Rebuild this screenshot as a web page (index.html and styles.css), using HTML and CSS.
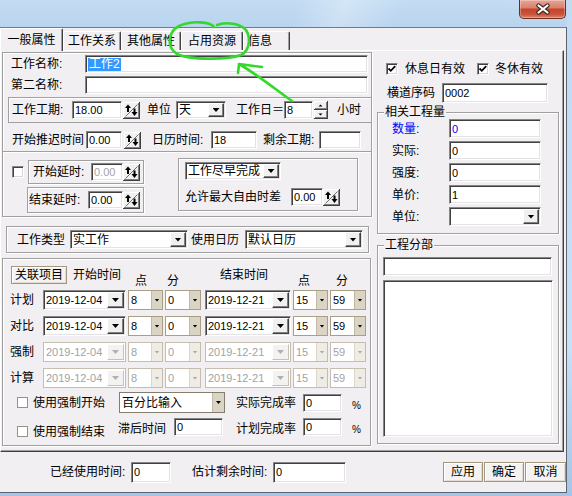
FILE: index.html
```html
<!DOCTYPE html>
<html lang="zh-CN">
<head>
<meta charset="utf-8">
<title>工作属性</title>
<link rel="stylesheet" href="styles.css">
</head>
<body>
<div class="window">
  <div class="titlebar">
    <div class="close"><svg width="18" height="12" viewBox="0 0 18 12"><path d="M4.5 2.5 L13.5 9.5 M13.5 2.5 L4.5 9.5" stroke="#3b2a26" stroke-width="4.4" stroke-linecap="round"/><path d="M4.5 2.5 L13.5 9.5 M13.5 2.5 L4.5 9.5" stroke="#fff" stroke-width="2.2" stroke-linecap="round"/></svg></div>
  </div>
  <div class="client">
    <div class="tabs">
      <div class="tab active w63">一般属性</div>
      <div class="tab w58">工作关系</div>
      <div class="tab w60">其他属性</div>
      <div class="tab w62">占用资源</div>
      <div class="tab w47 tleft">信息</div>
    </div>
    <div class="page">
      <div class="leftcol">
        <div class="grp grp-a">
          <div class="row r-name">
            <span class="lbl w74">工作名称:</span>
            <div class="inp w283 h18"><span class="sel">工作2</span></div>
          </div>
          <div class="row r-name2">
            <span class="lbl w74">第二名称:</span>
            <div class="inp w283 h18"></div>
          </div>
          <div class="subbox">
            <span class="lbl w60">工作工期:</span>
            <div class="inp w50 h18">18.00</div>
            <svg class="spin ml1" width="17" height="17" viewBox="0 0 17 17"><rect width="17" height="17" fill="#404040"/><rect width="16" height="16" fill="#fff"/><rect x="1" y="1" width="15" height="15" fill="#808080"/><rect x="1" y="1" width="14" height="14" fill="#f0f0f0"/><path d="M2.5 14.5 L14.5 2.5" stroke="#707070"/><path d="M2 6 L5 2.5 L8 6 Z" fill="#000"/><rect x="4" y="5.5" width="2" height="4.5" fill="#000"/><rect x="10.5" y="6.5" width="2" height="4" fill="#000"/><path d="M8.5 10 L11.5 14 L14.5 10 Z" fill="#000"/></svg>
            <span class="lbl ml7 w29">单位</span>
            <div class="inp combo w50 h18"><span class="ctext">天</span><span class="dd"></span></div>
            <span class="lbl ml10 w48">工作日＝</span>
            <div class="inp w29 h18">8</div>
            <svg class="updown ml1" width="14" height="18" viewBox="0 0 14 18"><rect width="14" height="9" fill="#404040"/><rect width="13" height="8" fill="#fff"/><rect x="1" y="1" width="12" height="7" fill="#808080"/><rect x="1" y="1" width="11" height="6" fill="#f0f0f0"/><path d="M4.5 5.5 L6.5 3.5 L8.5 5.5 Z" fill="#000"/><rect y="9" width="14" height="9" fill="#404040"/><rect y="9" width="13" height="8" fill="#fff"/><rect x="1" y="10" width="12" height="7" fill="#808080"/><rect x="1" y="10" width="11" height="6" fill="#f0f0f0"/><path d="M4.5 12.5 L6.5 14.5 L8.5 12.5 Z" fill="#000"/></svg>
            <span class="lbl ml9">小时</span>
          </div>
          <div class="row r-delay">
            <span class="lbl w74">开始推迟时间</span>
            <div class="inp w36 h18">0.00</div>
            <svg class="spin ml2" width="17" height="17" viewBox="0 0 17 17"><rect width="17" height="17" fill="#404040"/><rect width="16" height="16" fill="#fff"/><rect x="1" y="1" width="15" height="15" fill="#808080"/><rect x="1" y="1" width="14" height="14" fill="#f0f0f0"/><path d="M2.5 14.5 L14.5 2.5" stroke="#707070"/><path d="M2 6 L5 2.5 L8 6 Z" fill="#000"/><rect x="4" y="5.5" width="2" height="4.5" fill="#000"/><rect x="10.5" y="6.5" width="2" height="4" fill="#000"/><path d="M8.5 10 L11.5 14 L14.5 10 Z" fill="#000"/></svg>
            <span class="lbl ml11 w59">日历时间:</span>
            <div class="inp w46 h18">18</div>
            <span class="lbl ml6 w56">剩余工期:</span>
            <div class="inp w42 h18"></div>
          </div>
        </div>

        <div class="grp grp-b">
          <div class="b-left">
            <div class="b-row1">
              <span class="cb"></span>
              <div class="box box1">
                <span class="lbl w58">开始延时:</span>
                <div class="inp w32 h18 dis">0.00</div>
                <svg class="spin" width="17" height="17" viewBox="0 0 17 17"><rect width="17" height="17" fill="#404040"/><rect width="16" height="16" fill="#fff"/><rect x="1" y="1" width="15" height="15" fill="#808080"/><rect x="1" y="1" width="14" height="14" fill="#f0f0f0"/><path d="M2.5 14.5 L14.5 2.5" stroke="#707070"/><path d="M2 6 L5 2.5 L8 6 Z" fill="#000"/><rect x="4" y="5.5" width="2" height="4.5" fill="#000"/><rect x="10.5" y="6.5" width="2" height="4" fill="#000"/><path d="M8.5 10 L11.5 14 L14.5 10 Z" fill="#000"/></svg>
              </div>
            </div>
            <div class="box box2">
              <span class="lbl w59">结束延时:</span>
              <div class="inp w35 h18">0.00</div>
              <svg class="spin" width="17" height="17" viewBox="0 0 17 17"><rect width="17" height="17" fill="#404040"/><rect width="16" height="16" fill="#fff"/><rect x="1" y="1" width="15" height="15" fill="#808080"/><rect x="1" y="1" width="14" height="14" fill="#f0f0f0"/><path d="M2.5 14.5 L14.5 2.5" stroke="#707070"/><path d="M2 6 L5 2.5 L8 6 Z" fill="#000"/><rect x="4" y="5.5" width="2" height="4.5" fill="#000"/><rect x="10.5" y="6.5" width="2" height="4" fill="#000"/><path d="M8.5 10 L11.5 14 L14.5 10 Z" fill="#000"/></svg>
            </div>
          </div>
          <div class="box b-right">
            <div class="inp combo w96 h18"><span class="ctext">工作尽早完成</span><span class="dd"></span></div>
            <div class="b-rrow">
              <span class="lbl w106">允许最大自由时差</span>
              <div class="inp w32 h18">0.00</div>
              <svg class="spin" width="17" height="17" viewBox="0 0 17 17"><rect width="17" height="17" fill="#404040"/><rect width="16" height="16" fill="#fff"/><rect x="1" y="1" width="15" height="15" fill="#808080"/><rect x="1" y="1" width="14" height="14" fill="#f0f0f0"/><path d="M2.5 14.5 L14.5 2.5" stroke="#707070"/><path d="M2 6 L5 2.5 L8 6 Z" fill="#000"/><rect x="4" y="5.5" width="2" height="4.5" fill="#000"/><rect x="10.5" y="6.5" width="2" height="4" fill="#000"/><path d="M8.5 10 L11.5 14 L14.5 10 Z" fill="#000"/></svg>
            </div>
          </div>
        </div>

        <div class="grp grp-c">
          <span class="lbl w53">工作类型</span>
          <div class="inp combo w118 h19"><span class="ctext">实工作</span><span class="dd"></span></div>
          <span class="lbl ml3 w54">使用日历</span>
          <div class="inp combo w118 h19"><span class="ctext">默认日历</span><span class="dd"></span></div>
        </div>

        <div class="grp grp-d">
          <div class="d-head">
            <div class="tbtn w56 h18">关联项目</div>
            <span class="lbl ml6">开始时间</span>
            <span class="lbl ml14 low">点</span>
            <span class="lbl ml20 low">分</span>
            <span class="lbl ml41">结束时间</span>
            <span class="lbl ml30 low">点</span>
            <span class="lbl ml26 low">分</span>
          </div>
          <div class="d-row">
            <span class="lbl w33">计划</span>
            <div class="inp combo w83 h20"><span class="ctext num">2019-12-04</span><span class="dd dd17"></span></div>
            <div class="tcombo w35 h20 ml2"><span class="ctext">8</span><span class="tdd"></span></div>
            <div class="tcombo w36 h20 ml2"><span class="ctext">0</span><span class="tdd"></span></div>
            <div class="inp combo w86 h20 ml4"><span class="ctext num">2019-12-21</span><span class="dd dd17"></span></div>
            <div class="tcombo w35 h20 ml2"><span class="ctext">15</span><span class="tdd"></span></div>
            <div class="tcombo w36 h20 ml2"><span class="ctext">59</span><span class="tdd"></span></div>
          </div>
          <div class="d-row">
            <span class="lbl w33">对比</span>
            <div class="inp combo w83 h20"><span class="ctext num">2019-12-04</span><span class="dd dd17"></span></div>
            <div class="tcombo w35 h20 ml2"><span class="ctext">8</span><span class="tdd"></span></div>
            <div class="tcombo w36 h20 ml2"><span class="ctext">0</span><span class="tdd"></span></div>
            <div class="inp combo w86 h20 ml4"><span class="ctext num">2019-12-21</span><span class="dd dd17"></span></div>
            <div class="tcombo w35 h20 ml2"><span class="ctext">15</span><span class="tdd"></span></div>
            <div class="tcombo w36 h20 ml2"><span class="ctext">59</span><span class="tdd"></span></div>
          </div>
          <div class="d-row">
            <span class="lbl w33">强制</span>
            <div class="dcombo dis w83 h20"><span class="ctext">2019-12-04</span><span class="ddd"></span></div>
            <div class="tcombo dis w35 h20 ml2"><span class="ctext">8</span><span class="tdd"></span></div>
            <div class="tcombo dis w36 h20 ml2"><span class="ctext">0</span><span class="tdd"></span></div>
            <div class="dcombo dis w86 h20 ml4"><span class="ctext">2019-12-21</span><span class="ddd"></span></div>
            <div class="tcombo dis w35 h20 ml2"><span class="ctext">15</span><span class="tdd"></span></div>
            <div class="tcombo dis w36 h20 ml2"><span class="ctext">59</span><span class="tdd"></span></div>
          </div>
          <div class="d-row">
            <span class="lbl w33">计算</span>
            <div class="dcombo dis w83 h20"><span class="ctext">2019-12-04</span><span class="ddd"></span></div>
            <div class="tcombo dis w35 h20 ml2"><span class="ctext">8</span><span class="tdd"></span></div>
            <div class="tcombo dis w36 h20 ml2"><span class="ctext">0</span><span class="tdd"></span></div>
            <div class="dcombo dis w86 h20 ml4"><span class="ctext">2019-12-21</span><span class="ddd"></span></div>
            <div class="tcombo dis w35 h20 ml2"><span class="ctext">15</span><span class="tdd"></span></div>
            <div class="tcombo dis w36 h20 ml2"><span class="ctext">59</span><span class="tdd"></span></div>
          </div>
          <div class="o-row o-row1">
            <div class="o-cell w101"><span class="tcb"></span><span class="lbl ml5">使用强制开始</span></div>
            <div class="o-cell w118"><div class="tcombo pcombo w106 h21 ml1"><span class="ctext">百分比输入</span><span class="tdd"></span></div></div>
            <span class="lbl w67">实际完成率</span>
            <div class="inp w39 h18">0</div>
            <span class="pct ml10">%</span>
          </div>
          <div class="o-row o-row2">
            <div class="o-cell w101 lowcell"><span class="tcb"></span><span class="lbl ml5">使用强制结束</span></div>
            <div class="o-cell w118"><span class="lbl w56 lowtxt">滞后时间</span><div class="inp w49 h18">0</div></div>
            <span class="lbl w67 lowtxt">计划完成率</span>
            <div class="inp w39 h18">0</div>
            <span class="pct ml10">%</span>
          </div>
        </div>
      </div>

      <div class="rightcol">
        <div class="rc-chk">
          <span class="cb"><svg width="10" height="10" viewBox="0 0 10 10"><path d="M1.5 4.5 L3.8 6.8 L8.2 2.2" fill="none" stroke="#000" stroke-width="1.8"/></svg></span>
          <span class="lbl ml7 w60">休息日有效</span>
          <span class="cb ml12"><svg width="10" height="10" viewBox="0 0 10 10"><path d="M1.5 4.5 L3.8 6.8 L8.2 2.2" fill="none" stroke="#000" stroke-width="1.8"/></svg></span>
          <span class="lbl ml6">冬休有效</span>
        </div>
        <div class="rc-code">
          <span class="lbl w55">横道序码</span>
          <div class="inp w106 h20">0002</div>
        </div>
        <fieldset class="fs fs1">
          <legend>相关工程量</legend>
          <div class="fs-row"><span class="lbl w57 blue">数量:</span><div class="inp w92 h19 blue">0</div></div>
          <div class="fs-row"><span class="lbl w57">实际:</span><div class="inp w92 h19">0</div></div>
          <div class="fs-row"><span class="lbl w57">强度:</span><div class="inp w92 h19">0</div></div>
          <div class="fs-row"><span class="lbl w57">单价:</span><div class="inp w92 h19">1</div></div>
          <div class="fs-row"><span class="lbl w57">单位:</span><div class="inp combo w92 h19"><span class="ctext"></span><span class="dd"></span></div></div>
        </fieldset>
        <fieldset class="fs fs2">
          <legend>工程分部</legend>
          <div class="inp w169 h19"></div>
          <div class="inp listbox w170"></div>
        </fieldset>
      </div>
    </div>

    <div class="footer">
      <span class="lbl w81">已经使用时间:</span>
      <div class="inp w40 h21">0</div>
      <span class="lbl ml21 w81">估计剩余时间:</span>
      <div class="inp w73 h21">0</div>
      <div class="btns">
        <div class="btn w40">应用</div>
        <div class="btn w40">确定</div>
        <div class="btn w41">取消</div>
      </div>
    </div>
  </div>
</div>
<svg class="annot" width="572" height="496" viewBox="0 0 572 496">
  <path d="M214 27 C211 22 192 20 179 26 C168 32 166 47 177 54 C189 60 228 60 241 55 C251 50 251 34 244 28 C237 23 224 22 217 25" fill="none" stroke="#33d92a" stroke-width="2.6" stroke-linecap="round" stroke-linejoin="round"/>
  <path d="M292 101 C275 89 258 75 239 64 M239 64 L262 67 M239 64 L238 73" fill="none" stroke="#33d92a" stroke-width="2.6" stroke-linecap="round" stroke-linejoin="round"/>
</svg>
</body>
</html>
```

FILE: styles.css
```css
* { box-sizing: border-box; }
html, body { margin: 0; padding: 0; }
body {
  width: 572px; height: 496px; overflow: hidden; position: relative;
  background: linear-gradient(180deg, #c2daf2 0%, #c9e0f5 70%, #a8c4e4 100%);
  font-family: "Liberation Sans", "Noto Sans CJK SC", sans-serif;
  font-size: 12px; line-height: 14px; color: #000;
}
.window { width: 567px; height: 493px; display: flex; flex-direction: column; }
.titlebar {
  height: 27px; flex: none; display: flex; justify-content: flex-end; align-items: flex-start;
  background:
    linear-gradient(110deg, rgba(255,255,255,0) 52%, rgba(255,255,255,.28) 60%, rgba(255,255,255,0) 70%),
    linear-gradient(180deg, #c4dcf3 0%, #b9d4ef 100%);
}
.close {
  width: 47px; height: 19px; margin-right: 1px;
  display: flex; align-items: center; justify-content: center;
  background: linear-gradient(180deg, #e7a595 0%, #d9826c 42%, #c4452c 52%, #c9543b 80%, #da866d 100%);
  border: 1px solid #6f2b1f; border-top: 0; border-radius: 0 0 5px 5px;
  box-shadow: inset 0 0 0 1px rgba(255,255,255,.3);
}
.client {
  flex: 1; display: flex; flex-direction: column; background: #f1eff1;
  border-top: 1px solid #6e7b8a; border-right: 1px solid #5a6571; border-bottom: 1px solid #5a6571;
}
.tabs { height: 22px; flex: none; display: flex; align-items: flex-end; }
.tab {
  flex: none; height: 19px; display: flex; align-items: center; justify-content: center;
  border-top: 1px solid #fff; border-left: 1px solid #fff; border-right: 1px solid #404040;
  box-shadow: inset -1px 0 0 #a0a0a0; border-radius: 2px 2px 0 0; background: #f1eff1;
  white-space: nowrap;
}
.tab.active { height: 23px; margin-bottom: -1px; position: relative; z-index: 1; }
.tab.tleft { justify-content: flex-start; padding-left: 4px; }

.page {
  flex: none; width: 564px; height: 402px; display: flex; align-items: flex-start;
  padding: 1px 0 0 1px;
  border-top: 1px solid #fff; border-left: 1px solid #fff;
  border-right: 1px solid #404040; border-bottom: 1px solid #404040;
  box-shadow: inset -1px -1px 0 #a0a0a0;
}
.leftcol { flex: none; width: 370px; display: flex; flex-direction: column; }
.rightcol { flex: none; width: 182px; margin-left: 5px; display: flex; flex-direction: column; }

.grp, .box {
  border: 1px solid #a0a0a0;
  box-shadow: inset 1px 1px 0 #fff, 1px 1px 0 #fff;
}
.grp-a { height: 100px; width: 370px; display: flex; flex-direction: column; }
.row { display: flex; align-items: center; height: 18px; }
.r-name { margin-top: 2px; padding-left: 8px; }
.r-name2 { margin-top: 3px; padding-left: 8px; }
.subbox {
  margin-top: 3px; margin-left: 5px; width: 363px; height: 26px;
  border: 1px solid #a0a0a0; border-right: 0;
  box-shadow: inset 1px 1px 0 #fff;
  display: flex; align-items: center; padding: 0 0 0 3px;
}
.r-delay { margin-top: 8px; padding-left: 9px; }

.grp-b { height: 65px; width: 370px; border-top: 0; display: flex; align-items: flex-start; }
.b-left { display: flex; flex-direction: column; }
.b-row1 { display: flex; align-items: center; margin-top: 8px; }
.b-row1 .cb { margin-left: 9px; }
.box1 { margin-left: 4px; width: 116px; height: 24px; display: flex; align-items: center; padding-left: 4px; }
.box2 { margin-top: 3px; margin-left: 24px; width: 117px; height: 26px; display: flex; align-items: center; padding-left: 1px; }
.b-right { margin-left: 34px; margin-top: 6px; width: 180px; height: 53px; padding: 3px 0 0 6px; display: flex; flex-direction: column; }
.b-rrow { display: flex; align-items: center; margin-top: 8px; }

.grp-c { margin-top: 9px; margin-left: 4px; width: 363px; height: 27px; display: flex; align-items: center; padding: 0 0 0 10px; }

.grp-d { margin-top: 5px; width: 369px; height: 188px; display: flex; flex-direction: column; }
.d-head { display: flex; align-items: center; height: 18px; margin-top: 7px; padding-left: 8px; }
.low { align-self: flex-end; margin-bottom: -4px; }
.d-row { display: flex; align-items: center; height: 20px; margin-top: 6px; padding-left: 7px; }
.o-row { display: flex; align-items: center; padding-left: 14px; }
.o-row1 { margin-top: 4px; height: 21px; }
.o-row2 { margin-top: 5px; height: 18px; }
.o-cell { flex: none; display: flex; align-items: center; }
.lowcell { margin-top: 9px; }
.lowtxt { margin-top: 4px; }
.pct { font-size: 10px; margin-top: 6px; }

.rc-chk { display: flex; align-items: center; margin-top: 11px; padding-left: 9px; height: 12px; }
.rc-code { display: flex; align-items: center; margin-top: 8px; padding-left: 10px; height: 20px; }

.fs {
  margin: 0; min-width: 0; width: 182px;
  border: 1px solid #a0a0a0;
  box-shadow: inset 1px 1px 0 #fff, 1px 1px 0 #fff;
}
.fs legend { padding: 0 1px; font-size: 12px; line-height: 14px; background: #f1eff1; }
.fs1 { margin-top: 2px; padding: 0 0 7px 6px; }
.fs2 { margin-top: 4px; padding: 5px 5px 6px 5px; }
.fs2 legend { margin-left: 1px; }
.fs-row { display: flex; align-items: center; height: 19px; padding-left: 8px; }
.fs-row + .fs-row { margin-top: 3px; }
.listbox { margin-top: 4px; height: 157px; }

.footer { flex: 1; display: flex; align-items: center; padding-left: 50px; }
.btns { margin-left: auto; display: flex; gap: 2px; }
.btns .btn + .btn { margin-left: -1px; }
.btn, .tbtn {
  flex: none; height: 20px; display: flex; align-items: center; justify-content: center;
  border: 1px solid #a39680; background: #f4f3f1; box-shadow: inset 1px 1px 0 #fff, inset -1px -1px 0 #e2ddd3;
  white-space: nowrap;
}
.tbtn { height: 18px; }

.lbl { flex: none; white-space: nowrap; }
.blue { color: #0000ff; }
.inp {
  flex: none; display: flex; align-items: center; overflow: hidden; white-space: nowrap;
  background: #fff; padding-left: 2px; font-size: 11px;
  border: 1px solid; border-color: #868686 #fff #fff #868686;
  box-shadow: inset 1px 1px 0 #404040, inset -1px -1px 0 #e4e2e4;
}
.inp.dis { color: #a3a3a3; }
.sel { background: #3399ff; color: #fff; padding: 0 1px; line-height: 13px; font-size: 12px; }
.combo { padding: 1px; justify-content: space-between; font-size: 12px; }
.ctext { flex: 1; padding-left: 1px; overflow: hidden; white-space: nowrap; }
.ctext.num { font-size: 11px; }
.dd {
  flex: none; width: 16px; align-self: stretch; display: flex; align-items: center; justify-content: center;
  background: #f0f0f0; border: 1px solid; border-color: #fff #404040 #404040 #fff;
  box-shadow: inset -1px -1px 0 #808080;
}
.dd17 { width: 17px; }
.dd::after { content: ""; width: 7px; height: 4px; background: #000; clip-path: polygon(0 0, 100% 0, 50% 100%); }

.tcombo, .dcombo {
  flex: none; display: flex; align-items: stretch; background: #fff; overflow: hidden;
  border: 1px solid #aa9e86; font-size: 11px;
}
.tcombo .ctext, .dcombo .ctext { display: flex; align-items: center; padding-left: 2px; }
.tdd {
  flex: none; width: 11px; display: flex; align-items: center; justify-content: center;
  background: #dad4c4; border-left: 1px solid #c2b8a4;
}
.tdd::after { content: ""; width: 5px; height: 3px; background: #000; clip-path: polygon(0 0, 100% 0, 50% 100%); }
.pcombo { border-color: #847c6c; font-size: 12px; }
.pcombo .tdd { width: 12px; }
.tcombo.dis, .dcombo.dis { border-color: #c5beae; color: #a3a3a3; }
.tcombo.dis .tdd { background: #efece6; border-left-color: #ddd7cb; }
.tcombo.dis .tdd::after { background: #a8a8a8; }
.dcombo .ddd {
  flex: none; width: 17px; margin: 1px; display: flex; align-items: center; justify-content: center;
  background: #f4f2f0; border: 1px solid; border-color: #fff #c8c2b6 #c8c2b6 #fff;
}
.dcombo .ddd::after { content: ""; width: 7px; height: 4px; background: #b0b0b0; clip-path: polygon(0 0, 100% 0, 50% 100%); }

.cb {
  flex: none; width: 12px; height: 12px; background: #fff; display: flex; align-items: center; justify-content: center;
  border: 1px solid; border-color: #868686 #fff #fff #868686;
  box-shadow: inset 1px 1px 0 #404040, inset -1px -1px 0 #d8d6d8;
}
.tcb { flex: none; width: 11px; height: 11px; background: #fff; border: 1px solid #9a9280; }

.spin, .updown { flex: none; display: block; }

.annot { position: absolute; left: 0; top: 0; pointer-events: none; }

/* sizes */
.w29 { width: 29px; } .w32 { width: 32px; } .w33 { width: 33px; } .w35 { width: 35px; } .w36 { width: 36px; }
.w39 { width: 39px; } .w40 { width: 40px; } .w41 { width: 41px; } .w42 { width: 42px; } .w46 { width: 46px; }
.w47 { width: 47px; } .w48 { width: 48px; } .w49 { width: 49px; } .w50 { width: 50px; } .w53 { width: 53px; }
.w54 { width: 54px; } .w55 { width: 55px; } .w56 { width: 56px; } .w57 { width: 57px; } .w58 { width: 58px; }
.w59 { width: 59px; } .w60 { width: 60px; } .w62 { width: 62px; } .w63 { width: 63px; } .w67 { width: 67px; }
.w73 { width: 73px; } .w74 { width: 74px; } .w81 { width: 81px; } .w83 { width: 83px; } .w86 { width: 86px; }
.w92 { width: 92px; } .w96 { width: 96px; } .w101 { width: 101px; } .w106 { width: 106px; } .w118 { width: 118px; }
.w169 { width: 169px; } .w170 { width: 170px; } .w283 { width: 283px; }
.h18 { height: 18px; } .h19 { height: 19px; } .h20 { height: 20px; } .h21 { height: 21px; }
.ml1 { margin-left: 1px; } .ml2 { margin-left: 2px; } .ml3 { margin-left: 3px; } .ml4 { margin-left: 4px; }
.ml5 { margin-left: 5px; } .ml6 { margin-left: 6px; } .ml7 { margin-left: 7px; } .ml9 { margin-left: 9px; }
.ml10 { margin-left: 10px; } .ml11 { margin-left: 11px; } .ml12 { margin-left: 12px; } .ml14 { margin-left: 14px; }
.ml20 { margin-left: 20px; } .ml21 { margin-left: 21px; } .ml26 { margin-left: 26px; } .ml30 { margin-left: 30px; }
.ml41 { margin-left: 41px; }
```
